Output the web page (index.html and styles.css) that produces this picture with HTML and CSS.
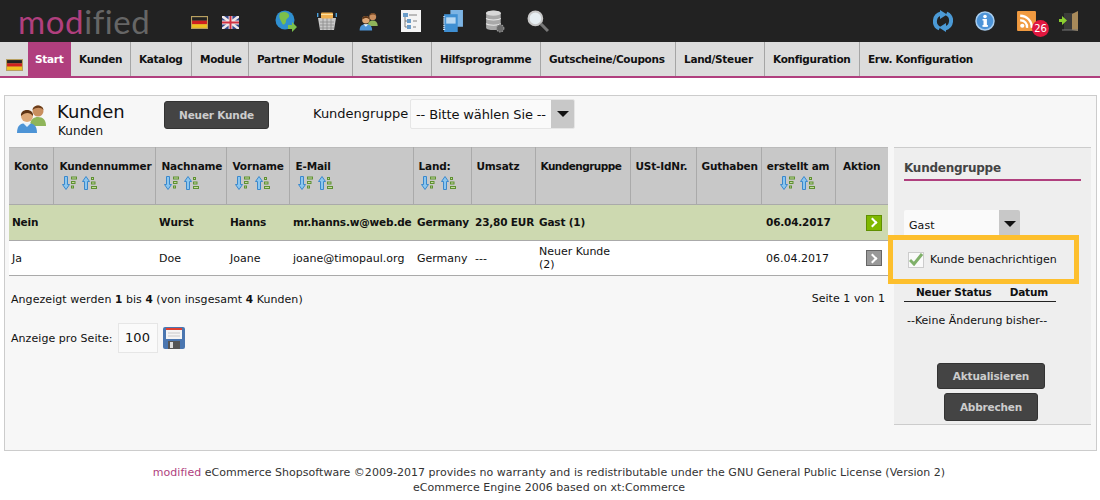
FILE: index.html
```html
<!DOCTYPE html>
<html lang="de">
<head>
<meta charset="utf-8">
<title>Kunden</title>
<link rel="stylesheet" href="styles.css">
</head>
<body>
<svg class="defs" width="0" height="0">
  <defs>
    <symbol id="flag-de" viewBox="0 0 16 11" preserveAspectRatio="none"><rect width="16" height="11" fill="#b8a060"/><rect x="1" y="1" width="14" height="3" fill="#222"/><rect x="1" y="4" width="14" height="3" fill="#d02020"/><rect x="1" y="7" width="14" height="3" fill="#f0c020"/></symbol>
    <symbol id="flag-uk" viewBox="0 0 16 12" preserveAspectRatio="none"><rect width="16" height="12" fill="#34488c"/><path d="M0 0L16 12M16 0L0 12" stroke="#f0e8e8" stroke-width="2.4"/><path d="M8 0V12M0 6H16" stroke="#f0e8e8" stroke-width="3.6"/><path d="M8 0V12M0 6H16" stroke="#d03040" stroke-width="1.8"/></symbol>
    <symbol id="people" viewBox="0 0 32 32">
      <circle cx="22" cy="9" r="5.5" fill="#c98f5f"/><path d="M16.500 8C17 2 27 2 27.500 8C25 5 20 5 16.500 8Z" fill="#6b3d1a"/><path d="M14 24C14 17 18 15 22 15C27 15 30 18 30 24Z" fill="#8fb55a"/>
      <circle cx="11" cy="14" r="6" fill="#dca878"/><path d="M5 14C4 6 18 6 17 14C14 10 9 10 5 14Z" fill="#5e3415"/><path d="M1 31C1 23 5 21 11 21C17 21 21 23 21 31Z" fill="#4d94d6"/><path d="M7 21L11 25L15 21Z" fill="#e8f2fb"/>
    </symbol>
    <symbol id="sort-down" viewBox="0 0 16 14"><path d="M2.500 .5H5.500V8.500H7.500L4 13.500L.5 8.500H2.500Z" fill="#8cc6ee" stroke="#3a88cc"/><path d="M9 2H15M9 6.500H13.500M9 11H12" stroke="#5f9032" stroke-width="3"/><path d="M10 2H14M10 6.500H12.500M10 11H11" stroke="#c4dca0"/></symbol>
    <symbol id="sort-up" viewBox="0 0 16 14"><path d="M2.500 13.500H5.500V5.500H7.500L4 .5L.5 5.500H2.500Z" fill="#8cc6ee" stroke="#3a88cc"/><path d="M9 2.500H12M9 7H13.500M9 11.500H15" stroke="#5f9032" stroke-width="3"/><path d="M10 2.500H11M10 7H12.500M10 11.500H14" stroke="#c4dca0"/></symbol>
  </defs>
</svg>

<header class="topbar">
  <div class="logo"><span class="logo-a">mod</span><span class="logo-b">ified</span></div>
  <div class="flags">
    <svg width="17" height="13"><use href="#flag-de"/></svg>
    <svg width="17" height="13"><use href="#flag-uk"/></svg>
  </div>
  <nav class="tools">
    <span class="cell"><svg width="22" height="22" viewBox="0 0 22 22"><circle cx="10" cy="10" r="9.500" fill="#2f8fd0"/><path d="M5 3C9 1 13 2 14 5C15 8 11 8 11 11C11 14 8 16 7 13C6 10 3 8 5 3Z" fill="#7cc04a"/><path d="M13 15H17V12L22 17L17 22V19H13Z" fill="#7cc04a"/></svg></span>
    <span class="cell"><svg width="20" height="20" viewBox="0 0 20 20"><path d="M1 7H19L17 19H3Z" fill="#c9c9c9"/><path d="M3 11H17M3 14H17M3 17H17M6 7V19M10 7V19M14 7V19" stroke="#8c8c8c" stroke-width=".8"/><rect x="4" y="1.500" width="12" height="6" rx="1" fill="#f0b050"/><path d="M4 3.500H16" stroke="#fbe0a0"/><path d="M0.500 2V6M19.500 2V6" stroke="#49a0dc" stroke-width="1.800"/></svg></span>
    <span class="cell"><svg width="20" height="20"><use href="#people"/></svg></span>
    <span class="cell"><svg width="20" height="22" viewBox="0 0 20 22"><rect width="20" height="22" fill="#f4f4f4"/><rect x="2" y="3" width="5" height="4" fill="#6a9cc8"/><rect x="6" y="9" width="4" height="4" fill="#6a9cc8"/><rect x="6" y="15" width="4" height="4" fill="#6a9cc8"/><path d="M8 5H16M12 11H16M12 17H15M4 7V17H6M4 11H6" stroke="#666" stroke-width=".8" fill="none"/></svg></span>
    <span class="cell"><svg width="20" height="22" viewBox="0 0 19 21"><rect x="7" y="0" width="12" height="16" fill="#7cb4e4"/><rect x="1" y="4" width="13" height="17" fill="#3f8fd2"/><rect x="3" y="7" width="9" height="6" fill="#b8d8f2"/><path d="M1 6V20" stroke="#cfe4f6" stroke-dasharray="1 1" stroke-width="2"/></svg></span>
    <span class="cell"><svg width="20" height="23" viewBox="0 0 19 22"><path d="M1 3C1 0 15 0 15 3V17C15 20 1 20 1 17Z" fill="#a8a8a8"/><ellipse cx="8" cy="3" rx="7" ry="2.500" fill="#d8d8d8"/><path d="M1 8C3 10 13 10 15 8M1 13C3 15 13 15 15 13" stroke="#e8e8e8" fill="none"/><circle cx="14.500" cy="17.500" r="3.500" fill="#6c6c6c" stroke="#9a9a9a" stroke-dasharray="1.500 1"/></svg></span>
    <span class="cell"><svg width="22" height="22" viewBox="0 0 21 21"><circle cx="8" cy="8" r="6.500" fill="#e6eef2" stroke="#c8c8c8" stroke-width="2"/><path d="M13 13L20 20" stroke="#777" stroke-width="2.800"/></svg></span>
  </nav>
  <div class="status">
    <span class="cell"><svg width="20" height="22" viewBox="0 0 20 22"><path d="M6.500 18.500A8 8 0 0 1 8 3.500" fill="none" stroke="#4b9ad6" stroke-width="4"/><path d="M7 0L14 4.500L7 9Z" fill="#4b9ad6"/><path d="M13.500 3.500A8 8 0 0 1 12 18.500" fill="none" stroke="#4b9ad6" stroke-width="4"/><path d="M13 13L6 17.500L13 22Z" fill="#4b9ad6"/></svg></span>
    <span class="cell"><svg width="20" height="20" viewBox="0 0 20 20"><circle cx="10" cy="10" r="9" fill="#4d94d8" stroke="#a8cdee" stroke-width="1.500"/><rect x="8.500" y="8" width="3.400" height="7.500" fill="#fff"/><rect x="7.500" y="14" width="5.400" height="1.800" fill="#fff"/><rect x="7.500" y="8" width="3" height="1.500" fill="#fff"/><circle cx="10" cy="5.500" r="1.800" fill="#fff"/></svg></span>
    <span class="cell rss">
      <svg width="19" height="20" viewBox="0 0 18 19"><rect width="18" height="19" rx="1" fill="#f09a40"/><circle cx="5" cy="14" r="2" fill="#fff"/><path d="M3 9A6 6 0 0 1 9.500 16M3 4.500A11 11 0 0 1 14 16" stroke="#fff" stroke-width="2.200" fill="none"/></svg>
      <span class="badge">26</span>
    </span>
    <span class="cell"><svg width="20" height="22" viewBox="0 0 20 22"><path d="M5 3H19V20H5Z" fill="#3a3a3a"/><path d="M13 4L19 1V21L13 20Z" fill="#a88a5a"/><path d="M3 20H19" stroke="#777"/><path d="M0 9H3V6L8 10.500L3 15V12H0Z" fill="#8ccf30"/></svg></span>
  </div>
</header>

<nav class="menu">
  <div class="menu-flag"><svg width="17" height="12"><use href="#flag-de"/></svg></div>
  <a class="menu-item is-active w43">Start</a>
  <a class="menu-item w60">Kunden</a>
  <a class="menu-item w61">Katalog</a>
  <a class="menu-item w57">Module</a>
  <a class="menu-item w104">Partner Module</a>
  <a class="menu-item w79">Statistiken</a>
  <a class="menu-item w109">Hilfsprogramme</a>
  <a class="menu-item w135">Gutscheine/Coupons</a>
  <a class="menu-item w89">Land/Steuer</a>
  <a class="menu-item w95">Konfiguration</a>
  <a class="menu-item is-last">Erw. Konfiguration</a>
</nav>

<main class="panel">
  <div class="content">
    <div class="page-head">
      <svg class="page-icon" width="32" height="32"><use href="#people"/></svg>
      <div class="page-title">
        <div class="title">Kunden</div>
        <div class="subtitle">Kunden</div>
      </div>
      <button class="btn btn-new">Neuer Kunde</button>
      <label class="filter-label">Kundengruppe</label>
      <div class="select select-top"><span class="select-text">-- Bitte wählen Sie --</span><span class="select-arrow"><i class="tri"></i></span></div>
    </div>

    <table class="grid">
      <colgroup>
        <col class="c1"><col class="c2"><col class="c3"><col class="c4"><col class="c5"><col class="c6"><col class="c7"><col class="c8"><col class="c9"><col class="c10"><col class="c11"><col class="c12">
      </colgroup>
      <thead>
        <tr>
          <th>Konto</th>
          <th class="pad">Kundennummer<div class="sort"><svg width="16" height="14"><use href="#sort-down"/></svg><svg width="16" height="14"><use href="#sort-up"/></svg></div></th>
          <th class="pad">Nachname<div class="sort"><svg width="16" height="14"><use href="#sort-down"/></svg><svg width="16" height="14"><use href="#sort-up"/></svg></div></th>
          <th class="pad">Vorname<div class="sort"><svg width="16" height="14"><use href="#sort-down"/></svg><svg width="16" height="14"><use href="#sort-up"/></svg></div></th>
          <th class="pad">E-Mail<div class="sort"><svg width="16" height="14"><use href="#sort-down"/></svg><svg width="16" height="14"><use href="#sort-up"/></svg></div></th>
          <th>Land:<div class="sort"><svg width="16" height="14"><use href="#sort-down"/></svg><svg width="16" height="14"><use href="#sort-up"/></svg></div></th>
          <th>Umsatz</th>
          <th class="tight">Kundengruppe</th>
          <th>USt-IdNr.</th>
          <th>Guthaben</th>
          <th class="center">erstellt am<div class="sort sort-center"><svg width="16" height="14"><use href="#sort-down"/></svg><svg width="16" height="14"><use href="#sort-up"/></svg></div></th>
          <th class="center">Aktion</th>
        </tr>
      </thead>
      <tbody>
        <tr class="row-active">
          <td>Nein</td><td></td><td>Wurst</td><td>Hanns</td><td>mr.hanns.w@web.de</td><td>Germany</td><td class="nowrap">23,80 EUR</td><td>Gast (1)</td><td></td><td></td><td class="date">06.04.2017</td>
          <td class="action"><span class="go go-green"></span></td>
        </tr>
        <tr>
          <td>Ja</td><td></td><td>Doe</td><td>Joane</td><td>joane@timopaul.org</td><td>Germany</td><td>---</td><td>Neuer Kunde (2)</td><td></td><td></td><td class="date">06.04.2017</td>
          <td class="action"><span class="go go-grey"></span></td>
        </tr>
      </tbody>
    </table>

    <div class="pager">
      <span>Angezeigt werden <b>1</b> bis <b>4</b> (von insgesamt <b>4</b> Kunden)</span>
      <span>Seite 1 von 1</span>
    </div>
    <div class="per-page">
      <span>Anzeige pro Seite:</span>
      <span class="per-input">100</span>
      <svg width="22" height="22" viewBox="0 0 22 22"><rect width="22" height="22" rx="2" fill="#4a76b0"/><rect x="3" y="1" width="16" height="11" fill="#f4f4f4"/><rect x="3" y="1" width="16" height="2" fill="#e04030"/><path d="M5 6H17M5 9H17" stroke="#c8c8c8"/><rect x="5" y="14" width="12" height="8" fill="#555"/><rect x="7" y="15" width="3" height="6" fill="#ddd"/></svg>
    </div>
  </div>

  <aside class="side">
    <h2 class="side-title">Kundengruppe</h2>
    <div class="select select-side"><span class="select-text">Gast</span><span class="select-arrow"><i class="tri"></i></span></div>
    <div class="notify">
      <span class="check"><svg width="14" height="13" viewBox="0 0 14 13"><path d="M1 7L5 11L13 1" fill="none" stroke="#7fb069" stroke-width="3"/></svg></span>
      <span>Kunde benachrichtigen</span>
    </div>
    <div class="status-head"><span>Neuer Status</span><span>Datum</span></div>
    <div class="status-empty">--Keine Änderung bisher--</div>
    <div class="side-actions">
      <button class="btn btn-save">Aktualisieren</button>
      <button class="btn btn-cancel">Abbrechen</button>
    </div>
  </aside>
</main>

<footer class="foot">
  <div><span class="foot-brand">modified</span> eCommerce Shopsoftware ©2009-2017 provides no warranty and is redistributable under the GNU General Public License (Version 2)</div>
  <div>eCommerce Engine 2006 based on xt:Commerce</div>
</footer>
</body>
</html>
```
FILE: styles.css
```css
* { box-sizing: border-box; }
html, body { margin: 0; padding: 0; }
body {
  width: 1100px;
  height: 500px;
  overflow: hidden;
  background: #fff;
  color: #111;
  font-family: "DejaVu Sans", Verdana, sans-serif;
  font-size: 11px;
  letter-spacing: 0.06px;
}
b { font-size: 10.5px; }
.defs { position: absolute; }
svg { display: block; flex: none; }

.topbar { height: 42px; background: #222; display: flex; align-items: center; }
.logo { width: 191px; padding-left: 18px; font-family: "Lato", sans-serif; font-size: 33px; line-height: 42px; letter-spacing: 0.6px; white-space: nowrap; }
.logo-a { color: #b03f7e; }
.logo-b { color: #666; }
.flags { display: flex; gap: 14px; width: 84px; align-items: center; margin-top: 3px; }
.tools { display: flex; gap: 20px; align-items: center; }
.cell { width: 22px; display: flex; justify-content: flex-start; }
.status { display: flex; align-items: center; margin-left: auto; padding-right: 19px; gap: 20px; }
.rss { position: relative; height: 20px; }
.badge { position: absolute; left: 15px; top: 9px; width: 17px; height: 17px; border-radius: 50%; background: #e0173f; color: #fff; font-size: 10px; line-height: 17px; text-align: center; letter-spacing: 0; }

.menu { height: 36px; background: #dcdcdc; border-bottom: 2px solid #b03f7e; display: flex; }
.menu-flag { width: 28px; display: flex; align-items: center; padding: 11px 0 0 6px; }
.menu-item { display: flex; align-items: center; padding-left: 8px; font-weight: 700; font-size: 10.5px; letter-spacing: -0.3px; color: #111; border-right: 1px solid #a5a5a5; white-space: nowrap; }
.menu-item.is-active { background: #b03f7e; color: #fff; border-right: 0; padding-left: 7px; }
.menu-item.is-last { border-right: 0; }
.w43 { width: 43px; } .w60 { width: 60px; } .w61 { width: 61px; } .w57 { width: 57px; } .w104 { width: 104px; }
.w79 { width: 79px; } .w109 { width: 109px; } .w135 { width: 135px; } .w89 { width: 89px; } .w95 { width: 95px; }

.panel { margin: 17px 3px 0 4px; height: 356px; background: #f7f7f7; border: 1px solid #ccc; display: flex; padding: 51px 4px 0 4px; }
.content { width: 879px; flex: none; margin-top: -51px; }

.page-head { height: 51px; display: flex; align-items: flex-start; }
.page-icon { margin: 6px 0 0 7px; }
.page-title { width: 116px; padding-left: 9px; }
.title { font-size: 18px; line-height: 22px; margin-top: 5px; color: #111; letter-spacing: 0; }
.subtitle { font-size: 12px; line-height: 16px; padding-left: 1px; letter-spacing: 0; }
.btn { border: 1px solid #333; border-radius: 3px; background: #444; color: #ccc; font-family: inherit; font-size: 10.5px; letter-spacing: -0.18px; font-weight: 700; padding: 0; }
.btn-new { width: 105px; height: 28px; margin-top: 5px; }
.filter-label { font-size: 13px; margin: 10px 0 0 44px; width: 97px; white-space: nowrap; letter-spacing: 0; }
.select { display: flex; background: #fafafa; border-radius: 2px; overflow: hidden; }
.select-top { width: 165px; height: 30px; margin-top: 3px; border: 1px solid #e6e6e6; font-size: 13px; letter-spacing: -0.12px; }
.select-text { flex: 1; padding-left: 5px; white-space: nowrap; align-self: center; }
.select-arrow { display: flex; align-items: center; justify-content: center; background: #c8c8c8; width: 23px; }
.tri { width: 0; height: 0; border-left: 6px solid transparent; border-right: 6px solid transparent; border-top: 6px solid #111; }

.grid { width: 879px; table-layout: fixed; border-collapse: collapse; }
.c1 { width: 44px; } .c2 { width: 102px; } .c3 { width: 71px; } .c4 { width: 63px; } .c5 { width: 124px; } .c6 { width: 58px; }
.c7 { width: 64px; } .c8 { width: 95px; } .c9 { width: 66px; } .c10 { width: 65px; } .c11 { width: 74px; } .c12 { width: 53px; }
.grid th { height: 57px; background: #c8c8c8; border-right: 1px solid #aaa; border-bottom: 1px solid #aaa; border-top: 1px solid #bbb; padding: 11px 0 0 5px; text-align: left; vertical-align: top; font-size: 10.5px; letter-spacing: -0.18px; font-weight: 700; white-space: nowrap; line-height: 14px; }
.grid th:last-child { border-right: 0; }
.grid th.pad { padding-left: 6px; }
.grid th.tight { letter-spacing: -0.55px; }
.grid th.center { text-align: center; padding-left: 0; }
.sort { display: flex; gap: 4px; margin: 3px 0 0 2px; }
.sort-center { justify-content: center; margin-left: 0; }
.grid td { background: #fff; height: 35px; border-bottom: 1px solid #aaa; padding: 0 3px 0 4px; font-size: 11px; letter-spacing: 0; line-height: 13px; vertical-align: middle; }
.grid td:first-child { padding-left: 3px; }
.grid .row-active td { background: #cdd9b0; font-weight: 700; font-size: 10.5px; letter-spacing: -0.18px; height: 36px; }
.grid td.date { padding-left: 5px; }
.grid td.nowrap { white-space: nowrap; padding-right: 0; }
.grid td.action { padding-right: 6px; }
.go { display: block; width: 16px; height: 16px; margin-left: auto; position: relative; }
.go::after { content: ""; position: absolute; left: 2px; top: 3.5px; width: 5px; height: 5px; border-top: 2px solid #fff; border-right: 2px solid #fff; transform: rotate(45deg); }
.go-green { background: #7fb800; border: 1px solid #5f8f00; }
.go-grey { background: #999; border: 1px solid #666; }

.pager { display: flex; justify-content: space-between; padding: 16px 3px 0 2px; line-height: 14px; }
.per-page { display: flex; align-items: center; margin-top: 16px; padding-left: 2px; }
.per-input { width: 40px; height: 30px; margin: 0 5px; border: 1px solid #e6e6e6; background: #fafafa; font-size: 13px; line-height: 28px; text-align: center; letter-spacing: 0; }

.side { width: 197px; height: 278px; margin-left: 6px; background: #eee; border-top: 1px solid #ccc; border-bottom: 1px solid #ccc; padding: 0 10px; display: flex; flex-direction: column; position: relative; }
.side-title { margin: 0; height: 33px; padding-top: 12px; border-bottom: 2px solid #b03f7e; font-size: 12px; letter-spacing: -0.25px; line-height: 16px; color: #444; }
.select-side { width: 116px; height: 27px; margin-top: 29px; font-size: 11px; }
.select-side .select-text { padding: 4px 0 0 5px; }
.select-side .select-arrow { width: 21px; }
.notify { width: 191px; height: 49px; margin-left: -16px; margin-top: -2px; border: 5px solid #fdbf2d; background: #eee; display: flex; align-items: center; gap: 6px; padding-left: 15px; position: relative; letter-spacing: -0.02px; }
.check { width: 16px; height: 16px; background: #fafafa; border: 1px solid #ccc; display: flex; align-items: center; justify-content: center; }
.status-head { display: flex; width: 152px; height: 17px; margin-top: 1px; padding: 0 8px 0 12px; justify-content: space-between; border-bottom: 1px solid #222; font-size: 10.5px; letter-spacing: -0.18px; font-weight: 700; line-height: 14px; }
.status-empty { padding: 12px 0 0 3px; line-height: 14px; letter-spacing: 0; }
.side-actions { display: flex; flex-direction: column; align-items: center; margin-top: 35px; padding-right: 3px; gap: 4px; }
.btn-save { width: 108px; height: 26px; }
.btn-cancel { width: 94px; height: 28px; }

.foot { text-align: center; font-size: 11px; letter-spacing: 0.03px; line-height: 15px; margin-top: 14px; color: #333; padding-right: 2px; }
.foot-brand { color: #b03f7e; }
```
